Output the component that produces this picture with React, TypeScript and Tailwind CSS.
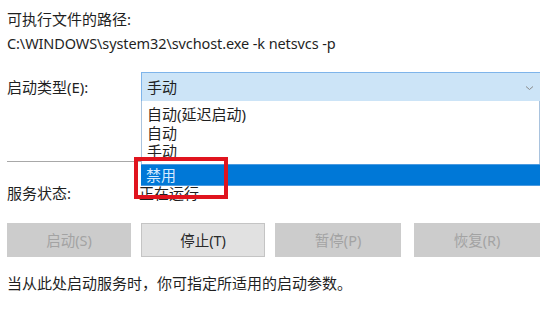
import React from "react";

const font = { fontFamily: '"Noto Sans", "Noto Sans CJK SC", sans-serif' };

function Btn({ label, disabled, className }: { label: string; disabled?: boolean; className?: string }) {
  return (
    <div
      className={
        "flex h-[34px] items-center justify-center text-[14.5px] " +
        (disabled
          ? "bg-[#cccccc] text-[#a3a3a3] border border-[#cccccc] "
          : "bg-[#e1e1e1] text-[#2a2a2a] border border-[#c4c4c4] ") +
        (className ?? "")
      }
    >
      {label}
    </div>
  );
}

export default function App() {
  return (
    <div
      className="relative w-[540px] h-[311px] overflow-hidden bg-white text-[#1f1f1f] text-[15px] leading-[20px]"
      style={font}
    >
      <div className="pl-[7px] pt-[9px]">
        <div>可执行文件的路径:</div>
        <div className="mt-[4px] text-[14.5px] tracking-[-0.1px]">C:\WINDOWS\system32\svchost.exe -k netsvcs -p</div>
      </div>

      <div className="mt-[19px] flex items-stretch">
        <div className="w-[141px] pl-[7px] flex items-center">启动类型(E):</div>
        <div className="flex-1 h-[29px] bg-[#cce4f7] border-t border-l border-[#7eb4ea] flex items-center justify-between pl-[5px] pr-[6px]">
          <span>手动</span>
          <svg width="9" height="6" viewBox="0 0 9 6" className="mt-[2px]">
            <path d="M1 1.5 L4.5 4.5 L8 1.5" fill="none" stroke="#8a8a8a" strokeWidth="1" />
          </svg>
        </div>
      </div>

      <div className="mt-[60px] mx-[7px] h-px bg-[#a8a8a8]" />

      <div className="mt-[21px] flex">
        <div className="w-[139px] pl-[7px]">服务状态:</div>
        <div>正在运行</div>
      </div>

      <div className="mt-[20px] flex pl-[7px]">
        <Btn label="启动(S)" disabled className="w-[125px]" />
        <Btn label="停止(T)" className="w-[125px] ml-[10px]" />
        <Btn label="暂停(P)" disabled className="w-[127px] ml-[10px]" />
        <Btn label="恢复(R)" disabled className="w-[127px] ml-[13px]" />
      </div>

      <div className="pl-[7px] mt-[16px]">当从此处启动服务时，你可指定所适用的启动参数。</div>

      {/* dropdown list overlay */}
      <div className="absolute left-[141px] top-[101px] w-[399px]">
        <div className="h-[63px] overflow-hidden bg-white border-l border-r border-[#a9c3de] pl-[5px] pt-[4px] leading-[18.5px]">
          <div>自动(延迟启动)</div>
          <div>自动</div>
          <div>手动</div>
        </div>
        <div className="h-[22px] bg-[#0078d7] border-t border-b border-[#4c9be0] pl-[5px] flex items-center text-[#d6ebff]">
          禁用
        </div>
      </div>

      {/* red annotation box */}
      <div className="absolute left-[134px] top-[157px] w-[94px] h-[42px] border-[4px] border-[#e0141e]" />
    </div>
  );
}
